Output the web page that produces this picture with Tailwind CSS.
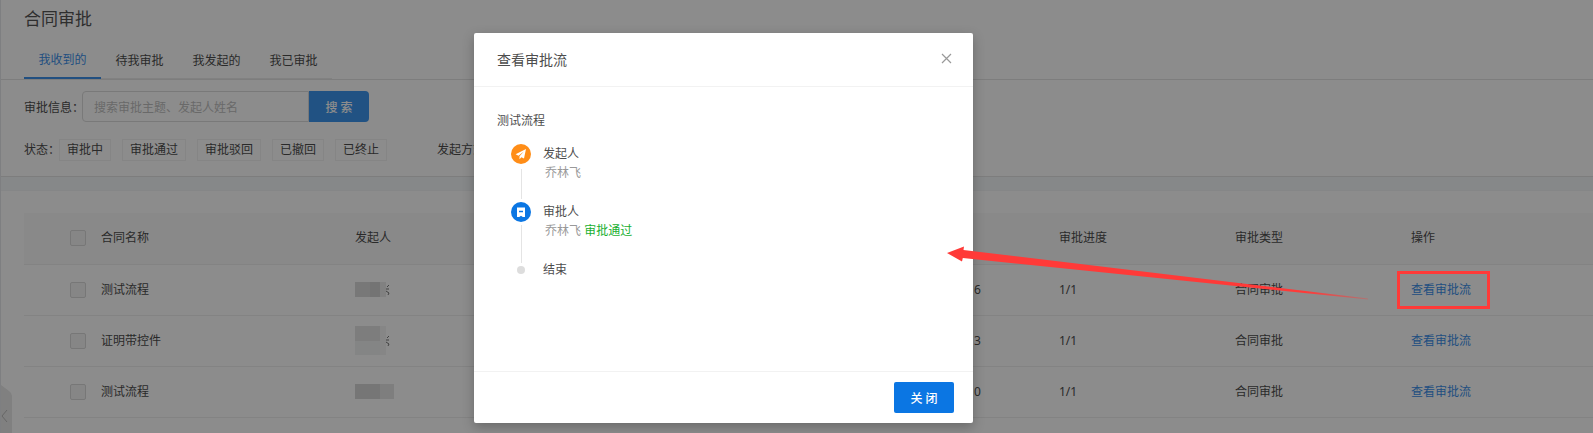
<!DOCTYPE html>
<html lang="zh-CN">
<head>
<meta charset="utf-8">
<title>合同审批</title>
<script src="https://cdn.jsdelivr.net/npm/@tailwindcss/browser@4"></script>
</head>
<body class="relative h-screen overflow-hidden bg-white text-xs text-[#4d4d4d] font-['Noto_Sans','Noto_Sans_CJK_SC',sans-serif]">
<main class="min-h-screen border-l border-gray-200">
  <section class="border-b border-[#e4e4e4]">
    <header class="border-b border-[#e4e4e4] pl-[23px] pt-1">
      <h1 class="text-[17px] leading-[30px] text-[#555]">合同审批</h1>
      <nav class="mt-[7px] flex leading-9">
        <a href="#" class="w-[77px] border-b-2 border-[#3c90ea] pt-0.5 text-center leading-[34px] text-[#3c90ea]">我收到的</a>
        <a href="#" class="w-[77px] border-b border-[#ececec] pt-[3px] text-center leading-[34px]">待我审批</a>
        <a href="#" class="w-[77px] border-b border-[#ececec] pt-[3px] text-center leading-[34px]">我发起的</a>
        <a href="#" class="w-[77px] border-b border-[#ececec] pt-[3px] text-center leading-[34px]">我已审批</a>
      </nav>
    </header>
    <form class="pl-[23px] pt-[11px] pb-[15px]">
      <div class="flex items-center">
        <label for="q" class="w-[58px] whitespace-nowrap pt-0.5">审批信息：</label>
        <input id="q" type="text" placeholder="搜索审批主题、发起人姓名" class="h-[31px] w-[227px] rounded-l-sm border border-[#dcdcdc] px-[11px] pt-0.5 placeholder:text-[#bfbfbf]">
        <button type="button" class="h-[31px] w-[60px] rounded-r-sm bg-[#3c96ee] pt-0.5 font-medium text-white">搜 索</button>
      </div>
      <div class="mt-[17px] flex items-center gap-[11px] whitespace-nowrap leading-5">
        <span class="-mr-[11px] w-[35px]">状态：</span>
        <button type="button" class="border border-[#f2f2f2] px-[7px]">审批中</button>
        <button type="button" class="border border-[#f2f2f2] px-[7px]">审批通过</button>
        <button type="button" class="border border-[#f2f2f2] px-[7px]">审批驳回</button>
        <button type="button" class="border border-[#f2f2f2] px-[7px]">已撤回</button>
        <button type="button" class="border border-[#f2f2f2] px-[7px]">已终止</button>
        <span class="ml-[39px]">发起方式：</span>
      </div>
    </form>
  </section>
  <div class="h-[13px] bg-[#f5f7fa]"></div>
  <section class="border-t border-gray-100 pl-[23px] pt-[22px]">
    <table class="w-full table-fixed border-collapse text-left">
      <colgroup><col class="w-[77px]"><col class="w-[254px]"><col class="w-[619px]"><col class="w-[85px]"><col class="w-[176px]"><col class="w-[176px]"><col></colgroup>
      <thead>
        <tr class="h-[51px] border-b border-[#eee] bg-[#fafafa]">
          <th class="pl-[46px]"><input type="checkbox" aria-label="全选" class="block size-4 appearance-none rounded-xs border border-[#d9d9d9] bg-[#f5f5f5]"></th>
          <th class="font-normal">合同名称</th><th class="font-normal">发起人</th><th></th><th class="font-normal">审批进度</th><th class="font-normal">审批类型</th><th class="font-normal">操作</th>
        </tr>
      </thead>
      <tbody>
        <tr class="h-[51px] border-b border-[#eee]">
          <td class="pl-[46px]"><input type="checkbox" aria-label="选择测试流程" class="block size-4 appearance-none rounded-xs border border-[#d9d9d9] bg-[#f5f5f5]"></td>
          <td>测试流程</td>
          <td><div class="flex h-[15px] w-[35px]"><i class="w-[15px] bg-[#dadada]"></i><i class="w-2.5 bg-[#d4d4d4]"></i><i class="w-1.5 bg-[#ebebeb]"></i><svg class="h-[15px] w-1" viewBox="0 0 4 15" fill="none" stroke="#777"><path d="M3 3L1 5M0 7h3M0 9l3 2-1 2"/></svg></div></td>
          <td>6</td><td>1/1</td><td>合同审批</td><td><a href="#" class="text-[#3c90ea]">查看审批流</a></td>
        </tr>
        <tr class="h-[51px] border-b border-[#eee]">
          <td class="pl-[46px]"><input type="checkbox" aria-label="选择证明带控件" class="block size-4 appearance-none rounded-xs border border-[#d9d9d9] bg-[#f5f5f5]"></td>
          <td>证明带控件</td>
          <td><div class="flex items-center"><div class="h-[29px] w-[25px] bg-[#f1f3f3]"><div class="h-[15px] bg-[#e4e4e4]"></div></div><i class="h-[29px] w-1.5 bg-[#f5f5f5]"></i><svg class="h-[15px] w-1" viewBox="0 0 4 15" fill="none" stroke="#777"><path d="M3 3L1 5M0 7h3M0 9l3 2-1 2"/></svg></div></td>
          <td>3</td><td>1/1</td><td>合同审批</td><td><a href="#" class="text-[#3c90ea]">查看审批流</a></td>
        </tr>
        <tr class="h-[51px] border-b border-[#eee]">
          <td class="pl-[46px]"><input type="checkbox" aria-label="选择测试流程" class="block size-4 appearance-none rounded-xs border border-[#d9d9d9] bg-[#f5f5f5]"></td>
          <td>测试流程</td>
          <td><div class="flex h-[15px]"><i class="w-[25px] bg-[#d7d7d7]"></i><i class="w-3.5 bg-[#e6e6e6]"></i></div></td>
          <td>0</td><td>1/1</td><td>合同审批</td><td><a href="#" class="text-[#3c90ea]">查看审批流</a></td>
        </tr>
      </tbody>
    </table>
  </section>
</main>

<button type="button" aria-label="收起" class="absolute bottom-0 left-px">
  <svg class="block h-12 w-[11px]" viewBox="0 0 11 48" fill="none"><path d="M0 0l8 6q3 2 3 5v37H0z" fill="#e9e9e9"/><path d="M6 25L1 31l5 6" stroke="#bbb"/></svg>
</button>

<div class="absolute inset-0 bg-black/45"></div>

<div role="dialog" aria-labelledby="dlg" class="absolute left-[474px] top-[33px] flex h-[390px] w-[499px] flex-col rounded-xs bg-white shadow-[0_4px_12px_rgba(0,0,0,0.25)]">
  <header class="flex h-[54px] items-center justify-between border-b border-[#f2f2f2] pl-[23px] pr-[21px]">
    <h2 id="dlg" class="text-sm">查看审批流</h2>
    <button type="button" aria-label="关闭窗口" class="pb-0.5"><svg class="size-[11px]" viewBox="0 0 11 11" stroke="#999" stroke-width="1.2"><path d="M1 1l9 9M10 1l-9 9"/></svg></button>
  </header>
  <div class="flex-1 px-[23px] pt-[25px]">
    <h3 class="leading-[18px]">测试流程</h3>
    <ol class="mt-[14px] pl-[14px] leading-5">
      <li class="flex h-[58px] gap-3">
        <div class="flex w-5 flex-col items-center">
          <svg class="size-5 shrink-0" viewBox="0 0 20 20"><circle cx="10" cy="10" r="10" fill="#ff8d17"/><path d="M15 5L4.600 10.200l2.900 1.500L12.800 7.500l-4.300 4.800v3l1.900-2.100 2.600 1.200z" fill="#fff"/></svg>
          <i class="mt-[5px] h-[30px] w-px bg-[#e4e4e4]"></i>
        </div>
        <div><p>发起人</p><p class="pl-0.5 leading-[18px] text-[#999]">乔林飞</p></div>
      </li>
      <li class="flex h-[58px] gap-3">
        <div class="flex w-5 flex-col items-center">
          <svg class="size-5 shrink-0" viewBox="0 0 20 20"><circle cx="10" cy="10" r="10" fill="#0b76e3"/><path d="M6 5.500h8v9.500h-2.200l-1.800-1.200-1.800 1.200H6z" fill="#fff"/><path d="M8 9.500h4" stroke="#0b76e3" stroke-width="1.500"/></svg>
          <i class="mt-[3px] h-[38px] w-px shrink-0 bg-[#e4e4e4]"></i>
        </div>
        <div><p>审批人</p><p class="pl-0.5 leading-[18px] text-[#999]">乔林飞 <span class="text-[#19b030]">审批通过</span></p></div>
      </li>
      <li class="flex items-center gap-3">
        <div class="flex w-5 justify-center"><i class="size-2 rounded-full bg-[#ddd]"></i></div>
        <p>结束</p>
      </li>
    </ol>
  </div>
  <footer class="flex h-[52px] items-center justify-end border-t border-[#f2f2f2] pr-[19px]">
    <button type="button" class="h-[31px] w-[60px] rounded-xs bg-[#0b76e3] pt-0.5 font-medium text-white">关 闭</button>
  </footer>
</div>

<svg class="pointer-events-none absolute left-[947px] top-[246px] h-[55px] w-[421px]" viewBox="0 0 421 55">
  <defs><linearGradient id="fade"><stop offset="0.85" stop-color="#ff3a38"/><stop offset="1" stop-color="#ff3a38" stop-opacity="0.3"/></linearGradient></defs>
  <path d="M0 7L17 0.500L16.500 4L421 52.500V53.500L15.800 12L15 15.500z" fill="url(#fade)"/>
</svg>
<div class="pointer-events-none absolute left-[1397px] top-[271px] h-[38px] w-[93px] border-3 border-[#ff3a38]"></div>
</body>
</html>
